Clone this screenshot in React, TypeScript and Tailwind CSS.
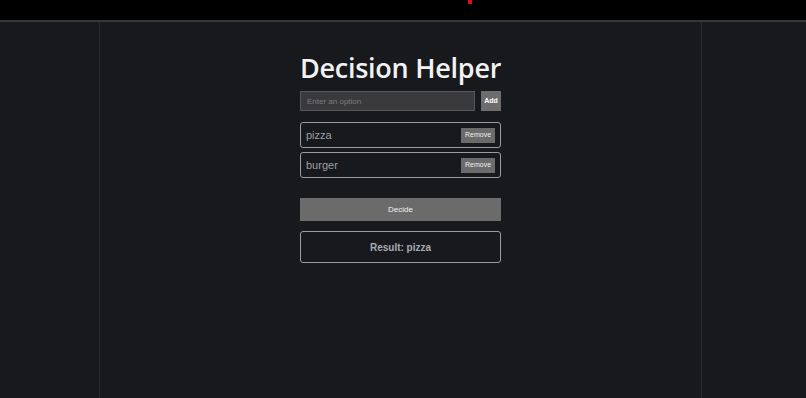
import { useState } from 'react';

export default function App() {
    const [options, setOptions] = useState<string[]>(['pizza', 'burger']);
    const [input, setInput] = useState('');
    const [result, setResult] = useState<string | null>('pizza');

    const addOption = () => {
        if (!input.trim()) return;
        setOptions([...options, input.trim()]);
        setInput('');
    };

    const removeOption = (idx: number) => {
        setOptions(options.filter((_, i) => i !== idx));
    };

    const decide = () => {
        if (options.length === 0) return;
        setResult(options[Math.floor(Math.random() * options.length)]);
    };

    return (
        <div className="h-screen flex flex-col bg-black font-['Liberation_Sans',Arial,sans-serif] overflow-hidden">
            {/* top strip */}
            <div className="h-[20px] relative shrink-0 bg-black">
                <span className="absolute left-[468px] top-0 w-[4px] h-[4px] bg-[#e01010]" />
            </div>

            <div className="flex-1 flex bg-[#18191d] border-t-2 border-[#36373c]">
                <div className="ml-[99px] w-[603px] border-x border-[#2b2c31] flex justify-center">
                    <div className="w-[201px] pt-[30px]">
                        <h1 className="-mx-[10px] whitespace-nowrap font-['Open_Sans',sans-serif] font-semibold text-[27px] leading-[32px] tracking-[-0.25px] text-[#f2f2f2] text-center">
                            Decision Helper
                        </h1>

                        <div className="flex gap-[6px] mt-[7px]">
                            <input
                                value={input}
                                onChange={e => setInput(e.target.value)}
                                placeholder="Enter an option"
                                className="w-[175px] h-[20px] bg-[#3a3a3c] border border-[#56575b] px-[6px] text-[8px] text-[#ddd] placeholder:text-[#7a7a7c] outline-none"
                            />
                            <button
                                onClick={addOption}
                                className="w-[20px] h-[20px] bg-[#6d6d6d] text-white text-[7px] font-bold flex items-center justify-center"
                            >
                                Add
                            </button>
                        </div>

                        <div className="mt-[11px] flex flex-col gap-[4px]">
                            {options.map((opt, i) => (
                                <div key={i} className="h-[26px] border border-[#9a9ca0] rounded-[3px] flex items-center justify-between pl-[5px] pr-[5px]">
                                    <span className="text-[11px] text-[#9c9fa5]">{opt}</span>
                                    <button
                                        onClick={() => removeOption(i)}
                                        className="w-[34px] h-[15px] bg-[#6b6b6b] text-[#eee] text-[7px] flex items-center justify-center"
                                    >
                                        Remove
                                    </button>
                                </div>
                            ))}
                        </div>

                        <button
                            onClick={decide}
                            className="mt-[20px] w-full h-[23px] bg-[#6b6b6b] text-[#f2f2f2] text-[8px] flex items-center justify-center"
                        >
                            Decide
                        </button>

                        {result && (
                            <div className="mt-[10px] h-[32px] border border-[#9a9ca0] rounded-[3px] flex items-center justify-center">
                                <span className="text-[10px] font-bold text-[#a4abb4]">Result: {result}</span>
                            </div>
                        )}
                    </div>
                </div>
            </div>
        </div>
    );
}
